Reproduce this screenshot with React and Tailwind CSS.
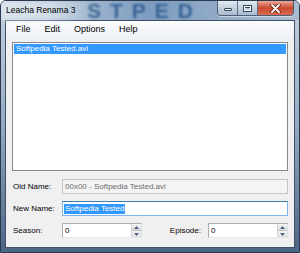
import React from "react";

function CaptionButtons() {
  return (
    <div className="ml-auto mr-[5px] flex h-[15px] rounded-b-[4px] border border-t-0 border-[#4b5e76] overflow-hidden shadow-[0_1px_0_rgba(255,255,255,0.5)]">
      <div className="w-[20px] h-full flex items-center justify-center bg-gradient-to-b from-[#e4ebf2] via-[#c3d0de] to-[#a9bbcf] border-r border-[#5d7088]">
        <div className="w-[8px] h-[3px] mt-[3px] bg-white border border-[#33475f] rounded-[1px]" />
      </div>
      <div className="w-[20px] h-full flex items-center justify-center bg-gradient-to-b from-[#e4ebf2] via-[#c3d0de] to-[#a9bbcf] border-r border-[#5d7088]">
        <div className="w-[9px] h-[7px] border border-[#33475f] bg-white p-[1px]">
          <div className="w-full h-full bg-[#c3d0de] border-t border-[#33475f]" />
        </div>
      </div>
      <div className="w-[35px] h-full flex items-center justify-center bg-gradient-to-b from-[#e9a898] via-[#c9472f] to-[#d86c52]">
        <svg width="11" height="9" viewBox="0 0 11 9">
          <path d="M2 1 L9 8 M9 1 L2 8" stroke="#5a1a10" strokeWidth="3.4" strokeLinecap="round" />
          <path d="M2 1 L9 8 M9 1 L2 8" stroke="#ffffff" strokeWidth="1.8" strokeLinecap="round" />
        </svg>
      </div>
    </div>
  );
}

function SpinBox({ value }) {
  return (
    <div className="w-[80px] h-[15px] bg-white border border-[#abadb3] border-b-[#e3e9ef] border-r-[#dbdfe6] flex">
      <span className="flex-1 pl-[2px] leading-[13px]">{value}</span>
      <div className="w-[10px] h-full flex flex-col border-l border-[#d5d5d5]">
        <div className="flex-1 flex items-center justify-center bg-gradient-to-b from-[#f5f5f5] to-[#dedede] border-b border-[#c2c2c2]">
          <svg width="5" height="3" viewBox="0 0 5 3">
            <path d="M0 3 L2.5 0 L5 3 Z" fill="#4d6185" />
          </svg>
        </div>
        <div className="flex-1 flex items-center justify-center bg-gradient-to-b from-[#f5f5f5] to-[#dedede]">
          <svg width="5" height="3" viewBox="0 0 5 3">
            <path d="M0 0 L5 0 L2.5 3 Z" fill="#4d6185" />
          </svg>
        </div>
      </div>
    </div>
  );
}

export default function App() {
  const menuItems = ["File", "Edit", "Options", "Help"];

  return (
    <div
      className="w-[300px] h-[253px] relative overflow-hidden rounded-t-[6px] border border-[#2b3a4f] bg-gradient-to-b from-[#c5d2df] via-[#94aac2] to-[#4c6585] flex flex-col text-black"
      style={{ fontFamily: '"Liberation Sans", Arial, sans-serif' }}
    >
      {/* title bar */}
      <div className="h-[19px] relative flex items-start shrink-0">
        <div className="absolute inset-0 bg-gradient-to-r from-[#cdd8e3] via-[#7d9cbf] to-[#a9bccf]" />
        {/* desktop watermark seen through the glass */}
        <div className="absolute left-[86px] top-0 h-[19px] text-[21px] leading-[19px] font-bold tracking-[9px] text-[#1f4f86] opacity-75 blur-[1.3px] whitespace-nowrap">
          STPED
        </div>
        <div className="absolute left-0 top-0 w-[92px] h-full bg-gradient-to-r from-[#dbe3ec] via-[#d4dee8] to-transparent blur-[2px]" />
        <span className="relative pl-[5px] pt-[4px] text-[8.5px] leading-[11px] text-black">Leacha Renama 3</span>
        <div className="relative ml-auto flex">
          <CaptionButtons />
        </div>
      </div>

      {/* client area */}
      <div className="flex-1 mx-[4px] mb-[4px] border border-[#3e4f66] bg-[#f0f0f0] flex flex-col">
        <div className="h-[17px] shrink-0 bg-gradient-to-b from-[#fbfcfd] to-[#eef1f6] flex items-center pl-[10px] gap-[14px] text-[9px]">
          {menuItems.map((item) => (
            <span key={item}>{item}</span>
          ))}
        </div>

        <div className="mx-[6px] mt-[4px] h-[129px] bg-white border border-[#828790] p-[1px] text-[8px]">
          <div className="h-[10px] bg-[#3399ff] text-white leading-[10px] pl-[2px]">Softpedia Tested.avi</div>
        </div>

        <div className="mx-[6px] mt-[8px] flex items-center text-[8px]">
          <span className="w-[50px] pl-[1px]">Old Name:</span>
          <div className="flex-1 h-[15px] bg-[#f4f4f4] border border-[#c5c5c5] text-[#6d6d6d] pl-[2px] leading-[13px]">
            00x00 - Softpedia Tested.avi
          </div>
        </div>

        <div className="mx-[6px] mt-[7px] flex items-center text-[8px]">
          <span className="w-[50px] pl-[1px]">New Name:</span>
          <div className="flex-1 h-[15px] bg-white border border-[#7eb4ea] border-t-[#3d7bad] pl-[1px] flex items-center">
            <span className="bg-[#3399ff] text-white leading-[10px] px-[1px]">Softpedia Tested</span>
          </div>
        </div>

        <div className="mx-[6px] mt-[7px] flex items-center text-[8px]">
          <span className="w-[50px] pl-[1px]">Season:</span>
          <SpinBox value="0" />
          <span className="ml-auto mr-[7px]">Episode:</span>
          <SpinBox value="0" />
        </div>
      </div>
    </div>
  );
}
